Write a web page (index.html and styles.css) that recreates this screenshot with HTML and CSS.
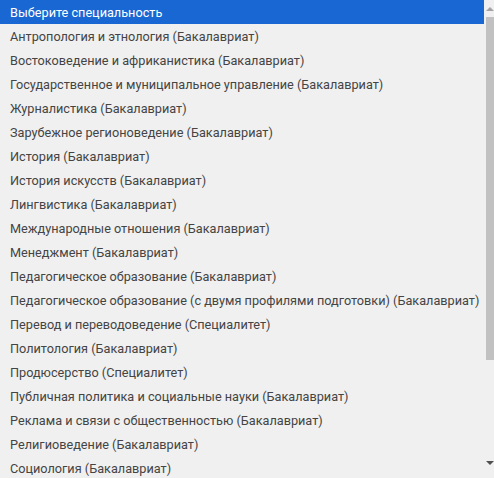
FILE: index.html
```html
<!DOCTYPE html>
<html lang="ru">
<head>
    <meta charset="UTF-8">
    <meta name="viewport" content="width=device-width, initial-scale=1.0">
    <title>Специальность</title>
    <link rel="stylesheet" href="styles.css">
</head>
<body>
    <div class="dropdown">
        <ul class="options">
            <li class="option selected">Выберите специальность</li>
            <li class="option">Антропология и этнология (Бакалавриат)</li>
            <li class="option">Востоковедение и африканистика (Бакалавриат)</li>
            <li class="option">Государственное и муниципальное управление (Бакалавриат)</li>
            <li class="option">Журналистика (Бакалавриат)</li>
            <li class="option">Зарубежное регионоведение (Бакалавриат)</li>
            <li class="option">История (Бакалавриат)</li>
            <li class="option">История искусств (Бакалавриат)</li>
            <li class="option">Лингвистика (Бакалавриат)</li>
            <li class="option">Международные отношения (Бакалавриат)</li>
            <li class="option">Менеджмент (Бакалавриат)</li>
            <li class="option">Педагогическое образование (Бакалавриат)</li>
            <li class="option">Педагогическое образование (с двумя профилями подготовки) (Бакалавриат)</li>
            <li class="option">Перевод и переводоведение (Специалитет)</li>
            <li class="option">Политология (Бакалавриат)</li>
            <li class="option">Продюсерство (Специалитет)</li>
            <li class="option">Публичная политика и социальные науки (Бакалавриат)</li>
            <li class="option">Реклама и связи с общественностью (Бакалавриат)</li>
            <li class="option">Религиоведение (Бакалавриат)</li>
            <li class="option">Социология (Бакалавриат)</li>
        </ul>
        <div class="scrollbar">
            <div class="arrow arrow-up"></div>
            <div class="track">
                <div class="thumb"></div>
            </div>
            <div class="arrow arrow-down"></div>
        </div>
    </div>
</body>
</html>
```

FILE: styles.css
```css
body {
    margin: 0;
    background-color: #f0f0f0;
    font-family: Roboto, "Noto Sans", sans-serif;
}
.dropdown {
    display: flex;
    height: 478px;
    width: 494px;
    gap: 2px;
    overflow: hidden;
}
.options {
    list-style: none;
    margin: 0;
    padding: 0;
    width: 484px;
    overflow: hidden;
}
.option {
    height: 23px;
    padding-top: 1px;
    line-height: 24px;
    padding-left: 10px;
    font-size: 12.7px;
    color: #444;
    white-space: nowrap;
}
.selected {
    background-color: #1967d2;
    color: #fff;
}
.scrollbar {
    width: 8px;
    display: flex;
    flex-direction: column;
}
.arrow {
    height: 17px;
    display: flex;
    justify-content: center;
    align-items: center;
}
.arrow-up::before,
.arrow-down::before {
    content: "";
    border-left: 4px solid transparent;
    border-right: 4px solid transparent;
}
.arrow-up::before {
    border-bottom: 4px solid #a3a3a3;
}
.arrow-down {
    align-items: flex-start;
    padding-top: 2px;
}
.arrow-down::before {
    border-top: 4px solid #505050;
}
.track {
    flex: 1;
}
.thumb {
    height: 343px;
    background-color: #c1c1c1;
}
```
